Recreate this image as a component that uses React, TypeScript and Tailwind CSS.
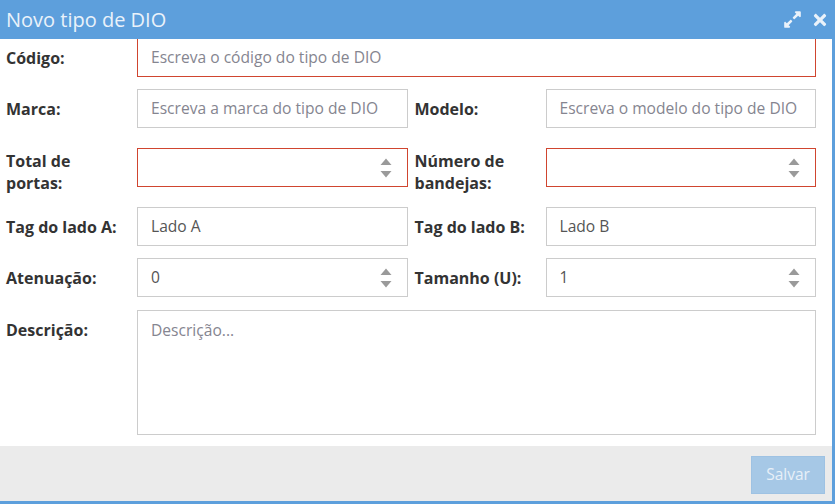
import { FaExpandAlt, FaTimes } from "react-icons/fa";

const FONT = { fontFamily: '"Open Sans", "Noto Sans", sans-serif' };

function Stepper() {
  return (
    <svg width="12" height="20" viewBox="0 0 12 20" className="shrink-0" aria-hidden>
      <path d="M6 0.5 L11.5 7 L0.5 7 Z" fill="#9a9a9a" />
      <path d="M0.5 13 L11.5 13 L6 19.5 Z" fill="#9a9a9a" />
    </svg>
  );
}

function Field({
  placeholder,
  value,
  invalid,
  number,
  className = "",
}: {
  placeholder?: string;
  value?: string;
  invalid?: boolean;
  number?: boolean;
  className?: string;
}) {
  return (
    <div
      className={`flex h-[39px] items-center border pl-[13px] pr-[15px] text-[15.6px] ${
        invalid ? "border-[#d0452f]" : "border-[#cccccc]"
      } ${className}`}
    >
      <span className={`flex-1 truncate ${value ? "text-[#555]" : "text-[#858590]"}`}>
        {value ?? placeholder}
      </span>
      {number && <Stepper />}
    </div>
  );
}

function Label({ children, className = "" }: { children: React.ReactNode; className?: string }) {
  return (
    <div className={`w-[131px] shrink-0 text-[16px] font-bold leading-[22px] text-[#333] ${className}`}>
      {children}
    </div>
  );
}

export default function App() {
  return (
    <div style={FONT} className="flex h-[504px] w-[835px] flex-col bg-[#5d9fdc] pb-[3px] pr-[3px]">
      <header className="relative z-10 flex h-[39px] shrink-0 items-center justify-between bg-[#5d9fdc] pl-[6px] pr-[4px] text-[#eaf2fa]">
        <h1 className="text-[20px] leading-none">Novo tipo de DIO</h1>
        <div className="flex items-center gap-[10px]">
          <FaExpandAlt className="h-[19px] w-[19px]" />
          <FaTimes className="h-[18px] w-[16px]" />
        </div>
      </header>

      <main className="flex flex-1 flex-col bg-white pl-[6px] pr-[16px]">
        <div className="-mt-px flex h-[39px] items-center">
          <Label className="pt-px">Código:</Label>
          <Field className="flex-1" placeholder="Escreva o código do tipo de DIO" invalid />
        </div>

        <div className="mt-[12px] flex items-center">
          <Label>Marca:</Label>
          <Field className="flex-1" placeholder="Escreva a marca do tipo de DIO" />
          <Label className="ml-[7px]">Modelo:</Label>
          <Field className="flex-1" placeholder="Escreva o modelo do tipo de DIO" />
        </div>

        <div className="mt-[20px] flex items-start">
          <Label className="pt-[2px]">
            Total de
            <br />
            portas:
          </Label>
          <Field className="flex-1" invalid number />
          <Label className="ml-[7px] pt-[2px]">
            Número de
            <br />
            bandejas:
          </Label>
          <Field className="flex-1" invalid number />
        </div>

        <div className="mt-[13px] flex items-center">
          <Label>Tag do lado A:</Label>
          <Field className="flex-1" value="Lado A" />
          <Label className="ml-[7px]">Tag do lado B:</Label>
          <Field className="flex-1" value="Lado B" />
        </div>

        <div className="mt-[12px] flex items-center">
          <Label>Atenuação:</Label>
          <Field className="flex-1" value="0" number />
          <Label className="ml-[7px]">Tamanho (U):</Label>
          <Field className="flex-1" value="1" number />
        </div>

        <div className="mt-[13px] flex items-start">
          <Label className="pt-[9px]">Descrição:</Label>
          <div className="h-[125px] flex-1 border border-[#cccccc] pl-[13px] pt-[8px] text-[15.6px] leading-[22px] text-[#858590]">
            Descrição...
          </div>
        </div>
      </main>

      <footer className="flex h-[55px] shrink-0 items-start justify-end bg-[#ebebeb] pr-[7px] pt-[10px]">
        <button
          type="button"
          disabled
          className="h-[38px] w-[74px] border border-[#9ec2e3] bg-[#a6c8e6] text-[15.5px] text-[#e8f0f8]"
        >
          Salvar
        </button>
      </footer>
    </div>
  );
}
